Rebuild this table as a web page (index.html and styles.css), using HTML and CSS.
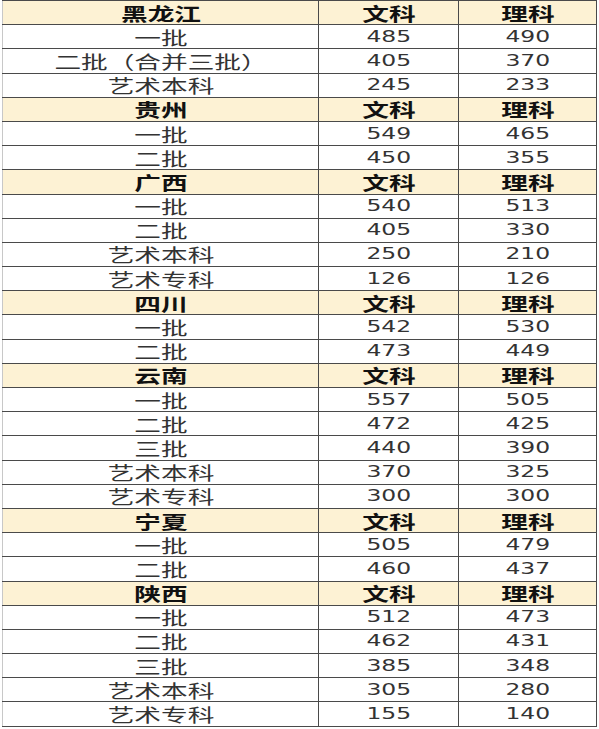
FILE: index.html
```html
<!DOCTYPE html>
<html lang="zh">
<head>
<meta charset="utf-8">
<link rel="stylesheet" href="styles.css">
</head>
<body>
<table class="scores">
<colgroup><col class="c1"><col class="c2"><col class="c3"></colgroup>
<tbody>
<tr class="head"><td><span>黑龙江</span></td><td><span>文科</span></td><td><span>理科</span></td></tr>
<tr><td><span>一批</span></td><td class="n"><span>485</span></td><td class="n"><span>490</span></td></tr>
<tr><td><span>二批（合并三批）</span></td><td class="n"><span>405</span></td><td class="n"><span>370</span></td></tr>
<tr><td><span>艺术本科</span></td><td class="n"><span>245</span></td><td class="n"><span>233</span></td></tr>
<tr class="head"><td><span>贵州</span></td><td><span>文科</span></td><td><span>理科</span></td></tr>
<tr><td><span>一批</span></td><td class="n"><span>549</span></td><td class="n"><span>465</span></td></tr>
<tr><td><span>二批</span></td><td class="n"><span>450</span></td><td class="n"><span>355</span></td></tr>
<tr class="head"><td><span>广西</span></td><td><span>文科</span></td><td><span>理科</span></td></tr>
<tr><td><span>一批</span></td><td class="n"><span>540</span></td><td class="n"><span>513</span></td></tr>
<tr><td><span>二批</span></td><td class="n"><span>405</span></td><td class="n"><span>330</span></td></tr>
<tr><td><span>艺术本科</span></td><td class="n"><span>250</span></td><td class="n"><span>210</span></td></tr>
<tr><td><span>艺术专科</span></td><td class="n"><span>126</span></td><td class="n"><span>126</span></td></tr>
<tr class="head"><td><span>四川</span></td><td><span>文科</span></td><td><span>理科</span></td></tr>
<tr><td><span>一批</span></td><td class="n"><span>542</span></td><td class="n"><span>530</span></td></tr>
<tr><td><span>二批</span></td><td class="n"><span>473</span></td><td class="n"><span>449</span></td></tr>
<tr class="head"><td><span>云南</span></td><td><span>文科</span></td><td><span>理科</span></td></tr>
<tr><td><span>一批</span></td><td class="n"><span>557</span></td><td class="n"><span>505</span></td></tr>
<tr><td><span>二批</span></td><td class="n"><span>472</span></td><td class="n"><span>425</span></td></tr>
<tr><td><span>三批</span></td><td class="n"><span>440</span></td><td class="n"><span>390</span></td></tr>
<tr><td><span>艺术本科</span></td><td class="n"><span>370</span></td><td class="n"><span>325</span></td></tr>
<tr><td><span>艺术专科</span></td><td class="n"><span>300</span></td><td class="n"><span>300</span></td></tr>
<tr class="head"><td><span>宁夏</span></td><td><span>文科</span></td><td><span>理科</span></td></tr>
<tr><td><span>一批</span></td><td class="n"><span>505</span></td><td class="n"><span>479</span></td></tr>
<tr><td><span>二批</span></td><td class="n"><span>460</span></td><td class="n"><span>437</span></td></tr>
<tr class="head"><td><span>陕西</span></td><td><span>文科</span></td><td><span>理科</span></td></tr>
<tr><td><span>一批</span></td><td class="n"><span>512</span></td><td class="n"><span>473</span></td></tr>
<tr><td><span>二批</span></td><td class="n"><span>462</span></td><td class="n"><span>431</span></td></tr>
<tr><td><span>三批</span></td><td class="n"><span>385</span></td><td class="n"><span>348</span></td></tr>
<tr><td><span>艺术本科</span></td><td class="n"><span>305</span></td><td class="n"><span>280</span></td></tr>
<tr><td><span>艺术专科</span></td><td class="n"><span>155</span></td><td class="n"><span>140</span></td></tr>
</tbody>
</table>
</body>
</html>
```
FILE: styles.css
```css
html, body {
  margin: 0;
  padding: 0;
  background: #ffffff;
}

.scores {
  margin-left: 2px;
  width: 594px;
  border-collapse: collapse;
  table-layout: fixed;
  font-family: "Noto Sans CJK SC", "Noto Sans", sans-serif;
  color: #333333;
}

.c1 { width: 316px; }
.c2 { width: 140px; }
.c3 { width: 138px; }

.scores tr {
  height: 24.2px;
}

.scores td {
  padding: 0;
  text-align: center;
  vertical-align: middle;
  border: 1px solid #4a4a4a;
  font-size: 18px;
  line-height: 20px;
  white-space: nowrap;
  overflow: hidden;
}

.scores td:first-child {
  border-left-color: #c8c8c8;
}

.scores td span {
  display: inline-block;
  transform: scaleX(1.48);
}

.scores td.n {
  font-family: "DejaVu Sans", "Noto Sans", sans-serif;
  font-size: 16.5px;
}

.scores td.n span {
  transform: scaleX(1.42);
}

.scores tr.head td {
  background: #fdf2d4;
  color: #111111;
  font-weight: bold;
  font-size: 18px;
}
```
